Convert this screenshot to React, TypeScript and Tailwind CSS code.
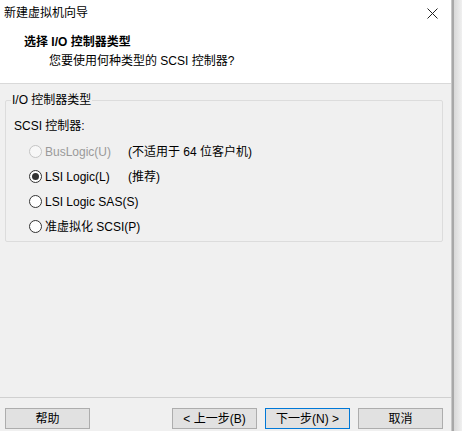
import { useState } from "react";

/* New VM wizard — "choose I/O controller type" page */

const FONT = '"Liberation Sans", "Noto Sans CJK SC", sans-serif';

type Option = { id: string; label: string; note?: string; disabled?: boolean };

const OPTIONS: Option[] = [
  { id: "buslogic", label: "BusLogic(U)", note: "(不适用于 64 位客户机)", disabled: true },
  { id: "lsi", label: "LSI Logic(L)", note: "(推荐)" },
  { id: "sas", label: "LSI Logic SAS(S)" },
  { id: "pvscsi", label: "准虚拟化 SCSI(P)" },
];

function Radio({ checked, disabled }: { checked: boolean; disabled?: boolean }) {
  return (
    <span
      className={
        "flex h-[13px] w-[13px] shrink-0 items-center justify-center rounded-full border " +
        (disabled ? "border-[#c4c4c4] bg-[#f7f7f7]" : "border-[#333333] bg-white")
      }
    >
      {checked && <span className="h-[7px] w-[7px] rounded-full bg-[#333333]" />}
    </span>
  );
}

function Button({ label, primary }: { label: string; primary?: boolean }) {
  return (
    <button
      className={
        "flex h-[21px] w-[85px] items-center justify-center border bg-[#e1e1e1] text-[12px] leading-none text-black " +
        (primary ? "border-[#0078d7]" : "border-[#adadad]")
      }
    >
      {label}
    </button>
  );
}

export default function App() {
  const [selected, setSelected] = useState("lsi");

  return (
    <div
      className="flex h-[431px] w-[462px] overflow-hidden bg-[#f0f0f0] text-black"
      style={{ fontFamily: FONT }}
    >
      <div className="flex w-[451px] flex-col">
        {/* Title bar + page header */}
        <div className="h-[84px] shrink-0 border-b border-[#d9d9d9] bg-white">
          <div className="flex h-[26px] items-center justify-between pl-[4px] pr-[13px]">
            <span className="text-[12px] leading-[16px]">新建虚拟机向导</span>
            <svg width="11" height="11" viewBox="0 0 11 11" className="text-[#222]">
              <path d="M0.5 0.5 L10.5 10.5 M10.5 0.5 L0.5 10.5" stroke="currentColor" strokeWidth="1" />
            </svg>
          </div>
          <div className="ml-[24px] mt-[8px] text-[12px] font-bold leading-[16px]">
            选择 I/O 控制器类型
          </div>
          <div className="ml-[49px] mt-[3px] text-[12px] leading-[16px]">
            您要使用何种类型的 SCSI 控制器?
          </div>
        </div>

        {/* Body */}
        <div className="flex-1 pl-[5px] pr-[8px] pt-[8px]">
          <fieldset className="rounded-[2px] border border-[#dcdcdc] pb-[2px]">
            <legend className="ml-[5px] px-[1px] text-[12px] leading-[16px]">I/O 控制器类型</legend>
            <div className="pl-[8px]">
              <div className="mt-[10px] text-[12px] leading-[16px]">SCSI 控制器:</div>
              <div className="mt-[5px] flex flex-col">
                {OPTIONS.map((o) => (
                  <div
                    key={o.id}
                    className="flex h-[25px] items-center whitespace-nowrap text-[12px]"
                    onClick={() => !o.disabled && setSelected(o.id)}
                  >
                    <div className="flex min-w-[114px] items-center gap-[3px] pl-[15px]">
                      <Radio checked={selected === o.id} disabled={o.disabled} />
                      <span className={o.disabled ? "text-[#9a9a9a]" : ""}>{o.label}</span>
                    </div>
                    {o.note && <span>{o.note}</span>}
                  </div>
                ))}
              </div>
            </div>
          </fieldset>
        </div>

        {/* Footer buttons */}
        <div className="h-[34px] shrink-0 border-t border-[#d0d0d0]">
          <div className="flex items-center justify-between pl-[5px] pr-[8px] pt-[10px]">
            <Button label="帮助" />
            <div className="flex gap-[8px]">
              <Button label="< 上一步(B)" />
              <Button label="下一步(N) >" primary />
              <Button label="取消" />
            </div>
          </div>
        </div>
      </div>

      {/* Window edge */}
      <div className="flex w-[11px]">
        <div className="w-[1px] bg-[#c8c8c8]" />
        <div className="w-[2px] bg-[#a8a8a8]" />
        <div className="flex-1 bg-gradient-to-r from-[#d8d8d8] to-[#f0f0f0]" />
      </div>
    </div>
  );
}
